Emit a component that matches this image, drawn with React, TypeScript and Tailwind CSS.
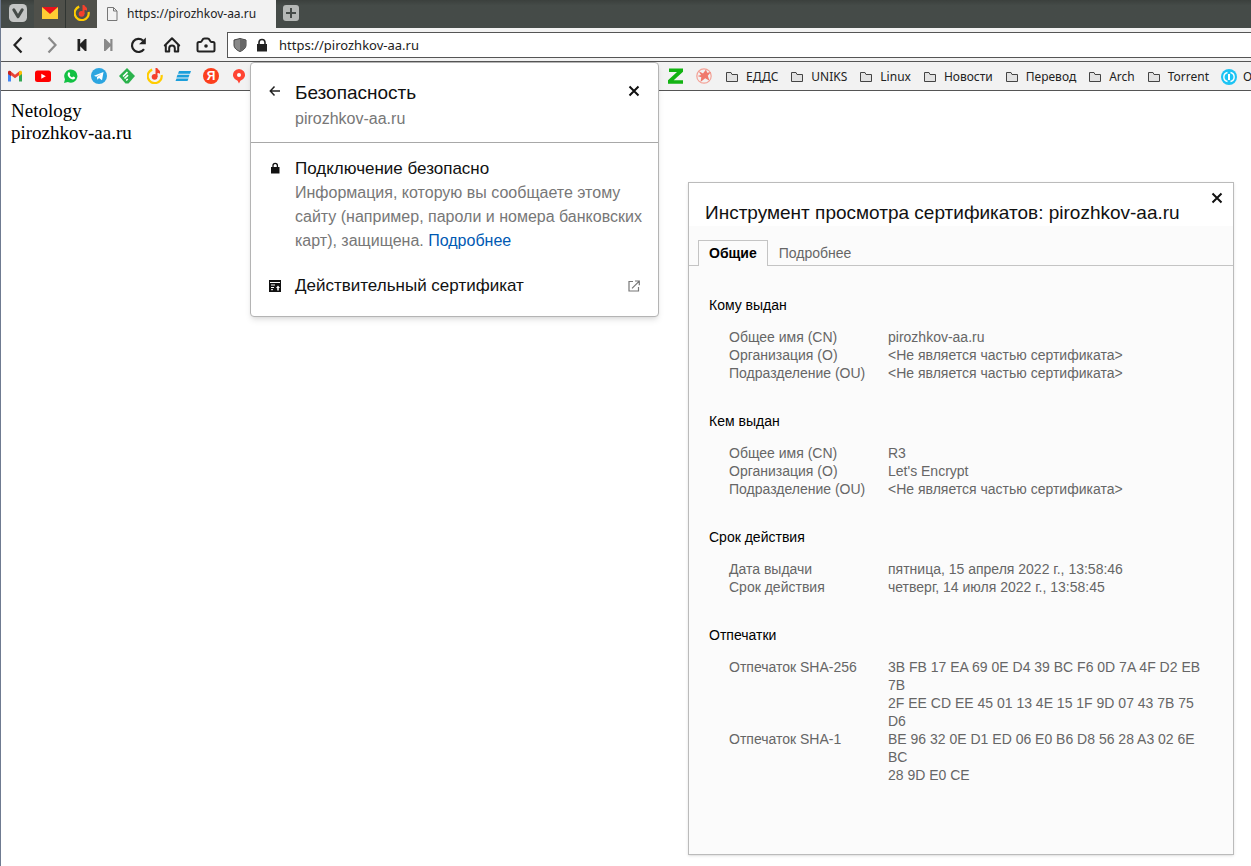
import type { ReactNode } from "react";

const ui = "font-['Noto_Sans','Open_Sans',sans-serif]";
const sans = "font-['Liberation_Sans',Arial,sans-serif]";

function Icon({ size = 16, box = "0 0 16 16", children }: { size?: number; box?: string; children: ReactNode }) {
  return (
    <svg width={size} height={size} viewBox={box} fill="none" aria-hidden="true" className="shrink-0">
      {children}
    </svg>
  );
}

function Music() {
  return (
    <Icon>
      <path d="M5.2 1.6A7 7 0 1 0 14.6 7" stroke="#fc0" strokeWidth="2.2" />
      <circle cx="7.6" cy="8.8" r="2.9" fill="#f5402c" />
      <path d="M8.500 0h1.800c.2 1.600 2.500 1.800 2.700 3.400v2.400c-1-.8-1.700-1-2.500-.8V9h-2z" fill="#f5402c" />
    </Icon>
  );
}

function Folder() {
  return (
    <Icon size={14} box="0 0 14 14">
      <path d="M1.500 11.500v-9h4.500l1 2h5.500v7z" fill="#e2e2e2" stroke="#444" strokeLinejoin="round" />
    </Icon>
  );
}

function Close() {
  return (
    <Icon size={12} box="0 0 12 12">
      <path d="M1.500 1.500l9 9M10.500 1.500l-9 9" stroke="#111" strokeWidth="2" />
    </Icon>
  );
}

const tools: { label: string; width: string; icon: ReactNode }[] = [
  { label: "Назад", width: "w-[34px]", icon: <path d="M13.500 2.500L6.500 10l7 7.500" stroke="#222" strokeWidth="2.200" /> },
  { label: "Вперёд", width: "w-[34px]", icon: <path d="M6.500 2.500l7 7.500-7 7.500" stroke="#8a8a8a" strokeWidth="2.200" /> },
  { label: "В начало", width: "w-[26px]", icon: <path d="M5.500 4h2.700v4.800L13 4h1.500v12H13l-4.800-4.800V16H5.500z" fill="#222" /> },
  { label: "В конец", width: "w-[26px]", icon: <path d="M14.500 4h-2.200v4.800L7.500 4H6v12h1.500l4.800-4.800V16h2.200z" fill="#8a8a8a" /> },
  {
    label: "Обновить",
    width: "w-[34px]",
    icon: (
      <>
        <path d="M16 14.200A6.600 6.600 0 1 1 15 5.500" stroke="#222" strokeWidth="2.200" />
        <path d="M17.800 2.500v6.800h-6.800z" fill="#222" />
      </>
    ),
  },
  {
    label: "Домашняя страница",
    width: "w-[34px]",
    icon: <path d="M2.800 10.500L10 3.200l7.200 7.300M3.800 9.800v6.800h3.400v-3.400a2.800 2.800 0 0 1 5.600 0v3.400h3.400V9.800" stroke="#222" strokeWidth="2" strokeLinejoin="round" strokeLinecap="round" />,
  },
  {
    label: "Снимок",
    width: "w-[34px]",
    icon: (
      <>
        <path d="M3 7h1.500c1 0 1.200-.7 1.700-1.700Q7 3.500 8.500 3.500h3q1.500 0 2.300 1.800c.5 1 .7 1.700 1.700 1.700H17q1.500 0 1.500 1.500V15q0 1.500-1.500 1.500H3Q1.500 16.500 1.500 15V8.500Q1.500 7 3 7z" stroke="#222" strokeWidth="2" />
        <circle cx="10" cy="11" r="1.800" fill="#222" />
      </>
    ),
  },
];

const quickLinks: { label: string; icon: ReactNode }[] = [
  {
    label: "Gmail",
    icon: (
      <Icon>
        <path d="M1 4v9.500h3V6z" fill="#4285f4" />
        <path d="M15 4v9.500h-3V6z" fill="#34a853" />
        <path d="M1 6V4l2-1.200 5 3.900 5-3.900V6.500l-5 3.700-5-3.700z" fill="#ea4335" />
        <path d="M12 3.500C13.500 2 15 3 15 4.300V6l-3 2.200z" fill="#fbbc04" />
        <path d="M1 6V4.300C1 3 2.500 2 4 3.500v4.700z" fill="#c5221f" />
      </Icon>
    ),
  },
  {
    label: "YouTube",
    icon: (
      <Icon>
        <rect y="2.500" width="16" height="11.500" rx="2.500" fill="#f00" />
        <path d="M6.300 5.800v4.900l4.500-2.450z" fill="#fff" />
      </Icon>
    ),
  },
  {
    label: "WhatsApp",
    icon: (
      <Icon>
        <path d="M1 15l1-3.800A6.600 6.600 0 1 1 4.900 14z" fill="#12c143" />
        <path d="M5.300 4.500c1.300-.8 1.500.4 2 1.600l-.7 1c.5 1.200 1.400 1.900 2.500 2.400l1-1c1 .3 2 .8 2 1.200-.4 2-2.400 2-4.300 1.100C5.500 9.500 3.700 6.800 5.300 4.500z" fill="#fff" />
      </Icon>
    ),
  },
  {
    label: "Telegram",
    icon: (
      <Icon>
        <circle cx="8" cy="8" r="8" fill="#2ca5e0" />
        <path d="M3 7.800l9.500-3.900-1.500 8.300-3-2.100-1.600 1.600-.5-2.800L10.500 6 5.100 8.700z" fill="#fff" />
      </Icon>
    ),
  },
  {
    label: "Feedly",
    icon: (
      <Icon>
        <path d="M8 0l8 8-6.500 7.500h-3L0 8z" fill="#2bb24c" />
        <path d="M4 8.500l4.500-4.300M5.500 10.500L9 7.200M7.200 12.500l1.500-1.500" stroke="#fff" strokeWidth="1.600" />
      </Icon>
    ),
  },
  { label: "Музыка", icon: <Music /> },
  {
    label: "Лента",
    icon: (
      <Icon>
        <path d="M4 3h12l-1 2.700H3zM2.500 6.700h12l-1 2.700h-12zM1.500 10.400h12l-1 2.700H.5z" fill="#1c9fdb" />
      </Icon>
    ),
  },
  {
    label: "Яндекс",
    icon: (
      <span className={`flex size-4 items-center justify-center rounded-full bg-[#fc3f1d] text-xs font-bold leading-4 text-white ${sans}`}>Я</span>
    ),
  },
  {
    label: "Карты",
    icon: (
      <Icon>
        <path d="M8 15.500L6.600 12.800A6 6 0 1 1 9.400 12.800z" fill="#f43" />
        <circle cx="8" cy="7" r="2" fill="#fff" />
      </Icon>
    ),
  },
];

const folders = ["ЕДДС", "UNIKS", "Linux", "Новости", "Перевод", "Arch", "Torrent"];

const none = "<Не является частью сертификата>";
const sections: { title: string; rows: [string, string[]][] }[] = [
  { title: "Кому выдан", rows: [["Общее имя (CN)", ["pirozhkov-aa.ru"]], ["Организация (O)", [none]], ["Подразделение (OU)", [none]]] },
  { title: "Кем выдан", rows: [["Общее имя (CN)", ["R3"]], ["Организация (O)", ["Let's Encrypt"]], ["Подразделение (OU)", [none]]] },
  { title: "Срок действия", rows: [["Дата выдачи", ["пятница, 15 апреля 2022 г., 13:58:46"]], ["Срок действия", ["четверг, 14 июля 2022 г., 13:58:45"]]] },
  {
    title: "Отпечатки",
    rows: [
      ["Отпечаток SHA-256", ["3B FB 17 EA 69 0E D4 39 BC F6 0D 7A 4F D2 EB 7B", "2F EE CD EE 45 01 13 4E 15 1F 9D 07 43 7B 75 D6"]],
      ["Отпечаток SHA-1", ["BE 96 32 0E D1 ED 06 E0 B6 D8 56 28 A3 02 6E BC", "28 9D E0 CE"]],
    ],
  },
];

function TabBar() {
  return (
    <header className={`flex h-7 items-stretch bg-linear-to-b from-[#3b403d] to-[#454b48] to-20% ${ui}`}>
      <button aria-label="Меню" className="flex w-[33px] items-center justify-center pb-0.5">
        <Icon size={18} box="0 0 18 18">
          <rect width="18" height="18" rx="4.500" fill="#c4c6c5" />
          <path d="M4.800 5.800l4.200 7 4.200-7" stroke="#454b48" strokeWidth="3" strokeLinecap="round" strokeLinejoin="round" />
        </Icon>
      </button>
      <button aria-label="Почта" className="flex w-8 items-center justify-center border-r border-[#303532] bg-[#4f504a] pb-0.5">
        <Icon>
          <path d="M0 2h16v12H0z" fill="#fc3" />
          <path d="M0 2h16L8 9z" fill="#e8121b" />
        </Icon>
      </button>
      <button aria-label="Музыка" className="flex w-[31px] items-center justify-center bg-[#4f504a] pb-0.5">
        <Music />
      </button>
      <button className="flex w-[179px] items-center gap-2 bg-[#f2f2f2] pl-2 text-left text-xs text-[#222]">
        <Icon size={14} box="0 0 14 14">
          <path d="M2.500.5h6l3.500 3.500v9.500H2.500zM8.500.5V4H12" stroke="#777" />
        </Icon>
        https://pirozhkov-aa.ru
      </button>
      <button aria-label="Новая вкладка" className="flex w-[30px] items-center justify-center pb-0.5">
        <Icon>
          <rect width="16" height="16" rx="3" fill="#b5b8b6" />
          <path d="M8 3v10M3 8h10" stroke="#454b48" strokeWidth="2" />
        </Icon>
      </button>
    </header>
  );
}

function AddressBar() {
  return (
    <div className={`flex h-[34px] items-center border-b border-[#555] bg-[#f2f2f2] ${ui}`}>
      <nav className="flex w-[226px] shrink-0">
        {tools.map((t) => (
          <button key={t.label} aria-label={t.label} className={`flex shrink-0 items-center justify-center ${t.width}`}>
            <Icon size={20} box="0 0 20 20">{t.icon}</Icon>
          </button>
        ))}
      </nav>
      <div className="flex h-[26px] grow items-center border border-r-0 border-[#555] bg-white">
        <span className="flex w-6 justify-center">
          <Icon size={14} box="0 0 14 14">
            <path d="M7 .5l6 1.500v5c0 3-3 5.500-6 6.500-3-1-6-3.500-6-6.500V2z" fill="#888" stroke="#444" />
            <path d="M7 1v12c3-1 5.500-3 5.500-6V2.500z" fill="#666" />
          </Icon>
        </span>
        <span className="flex w-5 justify-center">
          <Icon size={14} box="0 0 14 14">
            <path d="M2 6h10v7.500H2z" fill="#222" />
            <path d="M4 6.500V4.500a3 3 0 0 1 6 0v2" stroke="#222" strokeWidth="1.600" />
          </Icon>
        </span>
        <input aria-label="Адрес" defaultValue="https://pirozhkov-aa.ru" className="ml-[7px] min-w-0 grow bg-transparent pt-0.5 text-[13px] text-[#222] outline-none" />
      </div>
    </div>
  );
}

function Bookmarks() {
  return (
    <nav className={`flex h-[29px] items-center overflow-hidden border-b border-[#555] bg-[#f2f2f2] ${ui}`}>
      <div className="flex shrink-0 gap-3 pl-1.5">
        {quickLinks.map((q) => (
          <a key={q.label} href="#" aria-label={q.label}>{q.icon}</a>
        ))}
      </div>
      <div className="flex shrink-0 items-center gap-3 pl-[421px]">
        <a href="#" aria-label="Z">
          <Icon>
            <path d="M1 .5h14v3.200L5.700 12.200H15v3.500H0v-3.500L9 4H1z" fill="#12b312" />
          </Icon>
        </a>
        <a href="#" aria-label="Звезда">
          <Icon>
            <circle cx="8" cy="8" r="7.200" stroke="#f3a297" strokeWidth="1.200" />
            <path d="M2.500 3l4.500 2.500L10 1.500l1.200 3.300L15 4l-3.200 3.800 1.700 5-4.300-2.500L4.500 14l.8-4.700L1.500 8l3.500-1z" fill="#f0796c" />
          </Icon>
        </a>
      </div>
      <div className="flex shrink-0 items-center gap-3 pl-[13px] pt-px text-xs text-[#222]">
        {folders.map((f) => (
          <a key={f} href="#" className="flex items-center gap-[7px]">
            <Folder />
            {f}
          </a>
        ))}
        <a href="#" className="flex items-center gap-1.5">
          <Icon>
            <circle cx="8" cy="8" r="8" fill="#1cc4f4" />
            <path d="M6.500 3.500a4.600 4.600 0 0 0 0 9M9.500 3.500a4.600 4.600 0 0 1 0 9" stroke="#fff" strokeWidth="1.400" />
            <path d="M8 5v6" stroke="#fff" strokeWidth="2" />
          </Icon>
          О
        </a>
      </div>
    </nav>
  );
}

function SecurityPopup() {
  return (
    <section className={`absolute left-[249px] top-[62px] w-[409px] rounded border border-[#b4b4b4] bg-white shadow-md ${sans}`}>
      <div className="flex items-start border-b border-[#a8a8a8] px-[18px] pb-[11px] pt-4">
        <button aria-label="Назад" className="mt-1.5 w-[26px]">
          <Icon size={12} box="0 0 12 12">
            <path d="M5.500 1.500L1.300 6l4.200 4.500M1.500 6H11" stroke="#222" strokeWidth="1.500" />
          </Icon>
        </button>
        <div className="grow">
          <h2 className="text-[19px] leading-7 text-[#111]">Безопасность</h2>
          <p className="text-base leading-6 text-[#777]">pirozhkov-aa.ru</p>
        </div>
        <button aria-label="Закрыть" className="mt-1.5"><Close /></button>
      </div>
      <div className="flex pl-[18px] pr-3 pt-3.5">
        <div className="w-[26px] shrink-0 pt-[5px]">
          <Icon size={12} box="0 0 12 12">
            <path d="M2 5h8.500v6.500H2z" fill="#111" />
            <path d="M4 5V3.500a2.200 2.200 0 0 1 4.400 0V5" stroke="#111" strokeWidth="1.300" />
          </Icon>
        </div>
        <div>
          <h3 className="text-[17px] leading-6 text-[#111]">Подключение безопасно</h3>
          <p className="text-base leading-6 text-[#777]">
            Информация, которую вы сообщаете этому сайту (например, пароли и номера банковских карт), защищена.{" "}
            <a href="#" className="text-[#0059b3]">Подробнее</a>
          </p>
        </div>
      </div>
      <button className="flex w-full items-center px-[18px] pb-[18px] pt-[21px] text-left">
        <span className="w-[26px]">
          <Icon size={12} box="0 0 12 12">
            <path d="M0 0h12v12H0z" fill="#111" />
            <path d="M1 2.500h10M2 5h4M2 7.500h3M2 9.700h2" stroke="#fff" />
            <path d="M9 5.500L11 8H9.800v2.500H8.200V8H7z" fill="#fff" />
          </Icon>
        </span>
        <span className="grow text-[17px] leading-6 text-[#111]">Действительный сертификат</span>
        <Icon size={12} box="0 0 12 12">
          <path d="M5 1.500H1v9.500h9.500V7M7 1h4.300v4.300M11 1.300L4 8.300" stroke="#777" strokeWidth="1.200" />
        </Icon>
      </button>
    </section>
  );
}

function CertificateDialog() {
  return (
    <section role="dialog" aria-label="Сертификат" className={`absolute left-[687px] top-[182px] w-[546px] border border-[#bbb] bg-[#fbfbfb] pb-[70px] text-sm leading-[18px] text-[#666] shadow ${sans}`}>
      <div className="flex items-start justify-between bg-white pb-px pl-4 pr-2.5 pt-[9px]">
        <h2 className="pt-[9px] text-[19px] leading-6 text-[#111]">Инструмент просмотра сертификатов: pirozhkov-aa.ru</h2>
        <button aria-label="Закрыть"><Close /></button>
      </div>
      <div role="tablist" className="flex border-b border-[#c4c4c4] pl-[9px] pt-3.5">
        <button role="tab" aria-selected="true" className="-mb-px border border-b-0 border-[#c4c4c4] bg-[#fbfbfb] px-2.5 pb-1 pt-[3px] font-bold text-black">Общие</button>
        <button role="tab" aria-selected="false" className="px-[11px]">Подробнее</button>
      </div>
      <div className="flex flex-col gap-[30px] pl-5 pr-6 pt-[30px]">
        {sections.map((s) => (
          <section key={s.title}>
            <h3 className="mb-3.5 text-black">{s.title}</h3>
            <dl className="grid grid-cols-[159px_1fr] pl-5">
              {s.rows.map(([label, lines]) => (
                <div key={label} className="contents">
                  <dt>{label}</dt>
                  <dd>{lines.map((l) => <div key={l}>{l}</div>)}</dd>
                </div>
              ))}
            </dl>
          </section>
        ))}
      </div>
    </section>
  );
}

export default function App() {
  return (
    <div className="relative min-h-screen overflow-x-hidden border-l border-[#6f7b91] bg-white">
      <TabBar />
      <AddressBar />
      <Bookmarks />
      <main className="px-2.5 pt-[9px] font-['Liberation_Serif',serif] text-[19px] leading-[22px] text-black">
        <div>Netology</div>
        <div>pirozhkov-aa.ru</div>
      </main>
      <SecurityPopup />
      <CertificateDialog />
    </div>
  );
}
